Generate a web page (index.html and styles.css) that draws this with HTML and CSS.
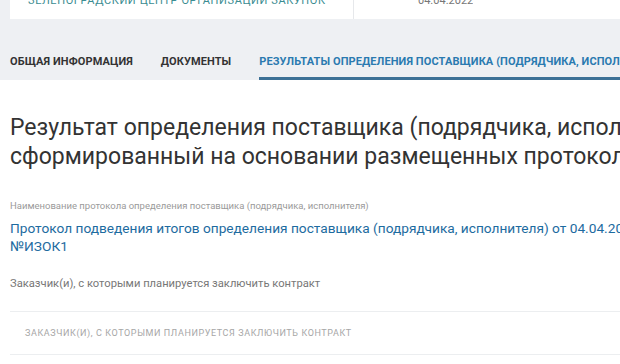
FILE: index.html
```html
<!DOCTYPE html>
<html>
<head lang="ru">
    <meta charset="UTF-8">
    <title>Результат определения поставщика</title>
    <link rel="stylesheet" href="styles.css">
</head>
<body>
    <div id="top">
        <div id="card">
            <div class="cell cell-main"><span class="link">ЗЕЛЕНОГРАДСКИЙ ЦЕНТР ОРГАНИЗАЦИИ ЗАКУПОК</span></div>
            <div class="cell cell-date"><span class="date">04.04.2022</span></div>
        </div>
        <ul id="tabs">
            <li>Общая информация</li>
            <li>Документы</li>
            <li class="selected">Результаты определения поставщика (подрядчика, исполнителя)</li>
        </ul>
    </div>
    <div id="content">
        <h1 class="title">Результат определения поставщика (подрядчика, исполнителя), сформированный на основании размещенных протоколов</h1>
        <div class="label">Наименование протокола определения поставщика (подрядчика, исполнителя)</div>
        <a class="protocol" href="#">Протокол подведения итогов определения поставщика (подрядчика, исполнителя) от 04.04.2022 №ИЗОК1</a>
        <div class="subtitle">Заказчик(и), с которыми планируется заключить контракт</div>
        <div class="table-head">Заказчик(и), с которыми планируется заключить контракт</div>
    </div>
</body>
</html>
```

FILE: styles.css
```css
*{
    margin: 0;
    padding: 0;
}
ul{
    list-style: none;
}
body{
    width: 620px;
    overflow: hidden;
    font-family: Roboto, "Noto Sans", sans-serif;
    color: #333;
    background: #fff;
}
#top{
    background: #eef0f3;
    padding: 0 0 0 10px;
}
#card{
    display: flex;
    background: #fff;
    margin-top: -12px;
    height: 31px;
}
#card .cell{
    padding: 6px 0 0 18px;
    font-size: 11px;
    line-height: 14px;
    white-space: nowrap;
    overflow: hidden;
}
#card .cell-main{
    width: 325px;
    border-right: 1px solid #e6e8eb;
}
#card .cell-date{
    padding-left: 64px;
}
#card .link{
    color: #3b8c91;
    letter-spacing: 0.6px;
}
#card .date{
    color: #777;
}
#tabs{
    display: flex;
    gap: 28px;
    margin-top: 36px;
    white-space: nowrap;
}
#tabs li{
    font-size: 11px;
    font-weight: bold;
    text-transform: uppercase;
    line-height: 14px;
    padding-bottom: 11px;
    color: #333;
    letter-spacing: 0.1px;
}
#tabs .selected{
    color: #2a7ab0;
    border-bottom: 3px solid #3d7196;
    padding-bottom: 8px;
}
#content{
    padding: 33px 0 0 10px;
}
.title{
    font-size: 23px;
    font-weight: normal;
    line-height: 29px;
    color: #333;
    width: 800px;
}
.label{
    margin-top: 28px;
    font-size: 9.5px;
    line-height: 14px;
    color: #9a9a9a;
}
.protocol{
    display: block;
    width: 650px;
    margin-top: 6px;
    font-size: 13.7px;
    line-height: 18px;
    color: #1d6ba0;
    text-decoration: none;
}
.subtitle{
    margin-top: 22px;
    font-size: 11.2px;
    line-height: 14px;
    color: #777;
}
.table-head{
    margin-top: 20px;
    border-top: 1px solid #eceef0;
    border-bottom: 1px solid #eceef0;
    padding: 15px 15px 14px;
    font-size: 9px;
    line-height: 13px;
    letter-spacing: 0.6px;
    text-transform: uppercase;
    color: #a6a6a6;
}
```
